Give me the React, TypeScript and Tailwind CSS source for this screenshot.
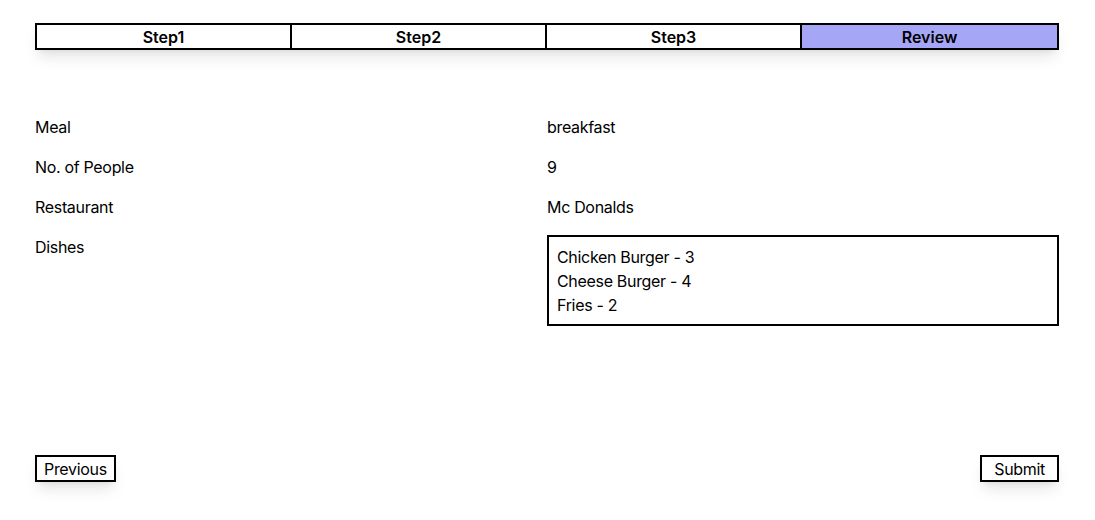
const steps = ["Step1", "Step2", "Step3", "Review"]

const rows = [
  { label: "Meal", value: "breakfast" },
  { label: "No. of People", value: "9" },
  { label: "Restaurant", value: "Mc Donalds" },
]

const dishes = [
  { name: "Chicken Burger", count: 3 },
  { name: "Cheese Burger", count: 4 },
  { name: "Fries", count: 2 },
]

export default function App() {
  return (
    <div className="min-h-screen bg-white text-black" style={{ fontFamily: "Inter, 'Liberation Sans', sans-serif" }}>
      <div className="ml-[35px] w-[1024px] pt-[23px]">
        {/* Steps */}
        <div className="grid grid-cols-4 border-2 border-black divide-x-2 divide-black shadow-lg">
          {steps.map((s, i) => (
            <div
              key={s}
              className={`h-[23px] flex items-center justify-center text-base font-semibold leading-none ${
                i === steps.length - 1 ? "bg-[#a5a6f6]" : "bg-white"
              }`}
            >
              {s}
            </div>
          ))}
        </div>

        {/* Summary */}
        <div className="mt-[65px] flex flex-col gap-4 text-base leading-6 tracking-[-0.02em]">
          {rows.map((r) => (
            <div key={r.label} className="grid grid-cols-2">
              <div>{r.label}</div>
              <div>{r.value}</div>
            </div>
          ))}
          <div className="grid grid-cols-2">
            <div>Dishes</div>
            <div className="border-2 border-black px-2 pt-2 pb-[7px]">
              {dishes.map((d) => (
                <div key={d.name}>
                  {d.name} - {d.count}
                </div>
              ))}
            </div>
          </div>
        </div>

        {/* Nav */}
        <div className="mt-[129px] flex justify-between tracking-[-0.02em]">
          <button className="h-[27px] px-[7px] border-2 border-black bg-white text-base leading-none shadow-lg">
            Previous
          </button>
          <button className="h-[27px] px-3 border-2 border-black bg-white text-base leading-none shadow-lg">
            Submit
          </button>
        </div>
      </div>
    </div>
  )
}
